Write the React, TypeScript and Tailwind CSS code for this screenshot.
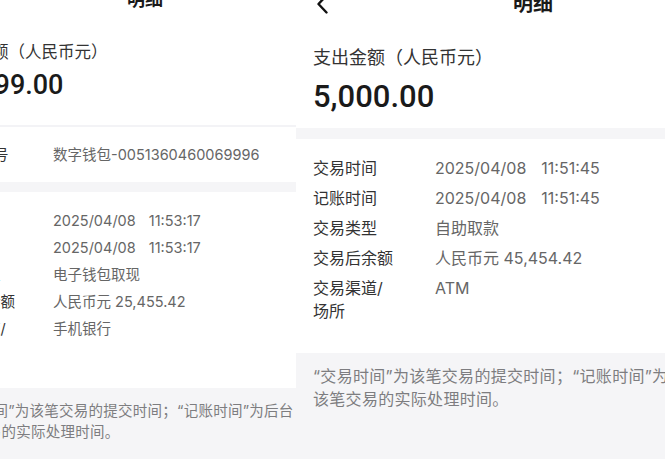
import React from "react";

function BackArrow() {
  return (
    <svg width="12" height="20" viewBox="0 0 12 20" className="absolute left-[20px] top-[3px]">
      <path d="M10.5 1.5 L2.5 10 L10.5 18.5" fill="none" stroke="#111" strokeWidth="2.4" strokeLinecap="round" strokeLinejoin="round" />
    </svg>
  );
}

function LeftPanel() {
  const rows: [React.ReactNode, React.ReactNode][] = [
    ["交易时间", <><span>2025/04/08</span><span className="ml-[13px]">11:53:17</span></>],
    ["记账时间", <><span>2025/04/08</span><span className="ml-[13px]">11:53:17</span></>],
    ["交易类型", "电子钱包取现"],
    ["交易后余额", "人民币元 25,455.42"],
    [<>交易渠道/<br />场所</>, "手机银行"],
  ];
  return (
    <div className="w-[296px] shrink-0 overflow-hidden">
      <div className="ml-[-73px] w-[436px] h-[459px] flex flex-col bg-[#f5f5f7]">
        <div className="bg-white">
          <div className="relative -mt-[12px] h-[24px] flex items-center justify-center">
            <span className="text-[18px] leading-[24px] font-semibold text-[#1a1a1a]">明细</span>
          </div>
          <div className="pl-[15.5px] pt-[29px] pb-[23px]">
            <div className="text-[16.5px] leading-[22px] text-[#333]">支出金额（人民币元）</div>
            <div className="mt-[6px] font-['Roboto',sans-serif] text-[27px] leading-[33px] font-medium text-[#1a1a1a]">19,999.00</div>
          </div>
          <div className="h-[2px] bg-[#f3f3f6]" />
          <div className="pl-[15.5px] pt-[17px] pb-[17px] grid grid-cols-[74px_1fr] gap-x-[36.5px] text-[14.5px] leading-[21px]">
            <div className="pl-[8px] text-[#333]">对方账号</div>
            <div className="text-[#666]">数字钱包-0051360460069996</div>
          </div>
        </div>
        <div className="h-[10px]" />
        <div className="bg-white pl-[15.5px] pt-[18px] pb-[28px] grid grid-cols-[74px_1fr] gap-x-[36.5px] gap-y-[6px] text-[14.5px] leading-[21px]">
          {rows.map((r, i) => (
            <React.Fragment key={i}>
              <div className="text-[#333]">{r[0]}</div>
              <div className="text-[#666]">{r[1]}</div>
            </React.Fragment>
          ))}
        </div>
        <div className="pl-[15.5px] pt-[12px] text-[14.5px] leading-[21px] tracking-[0.25px] text-[#7d7d80]">
          <div className="whitespace-nowrap">“交易时间”为该笔交易的提交时间；“记账时间”为后台</div>
          <div className="whitespace-nowrap">该笔交易的实际处理时间。</div>
        </div>
      </div>
    </div>
  );
}

function RightPanel() {
  const rows: [React.ReactNode, React.ReactNode][] = [
    ["交易时间", <><span>2025/04/08</span><span className="ml-[15px]">11:51:45</span></>],
    ["记账时间", <><span>2025/04/08</span><span className="ml-[15px]">11:51:45</span></>],
    ["交易类型", "自助取款"],
    ["交易后余额", "人民币元 45,454.42"],
    [<>交易渠道/<br />场所</>, "ATM"],
  ];
  return (
    <div className="w-[474px] shrink-0 h-[459px] flex flex-col bg-[#f5f5f7]">
      <div className="bg-white">
        <div className="relative -mt-[9px] h-[26px] flex items-center justify-center">
          <BackArrow />
          <span className="text-[20px] leading-[26px] font-semibold text-[#1a1a1a]">明细</span>
        </div>
        <div className="px-[17px] pt-[29px] pb-[13px]">
          <div className="text-[18px] leading-[24px] text-[#333]">支出金额（人民币元）</div>
          <div className="mt-[8px] font-['Roboto',sans-serif] text-[31px] leading-[37px] font-medium text-[#1a1a1a]">5,000.00</div>
        </div>
      </div>
      <div className="h-[11px]" />
      <div className="bg-white px-[17px] pt-[18px] pb-[30px] grid grid-cols-[82px_1fr] gap-x-[40px] gap-y-[7px] text-[16px] leading-[23px]">
        {rows.map((r, i) => (
          <React.Fragment key={i}>
            <div className="text-[#333]">{r[0]}</div>
            <div className="text-[#666]">{r[1]}</div>
          </React.Fragment>
        ))}
      </div>
      <div className="px-[17px] pt-[12px] text-[16px] leading-[23px] tracking-[0.3px] text-[#7d7d80]">
        <div className="whitespace-nowrap">“交易时间”为该笔交易的提交时间；“记账时间”为后台处理</div>
        <div className="whitespace-nowrap">该笔交易的实际处理时间。</div>
      </div>
    </div>
  );
}

export default function App() {
  return (
    <div className="w-[665px] h-[459px] overflow-hidden flex bg-white font-['Inter','Noto_Sans_CJK_SC',sans-serif]">
      <LeftPanel />
      <RightPanel />
    </div>
  );
}
